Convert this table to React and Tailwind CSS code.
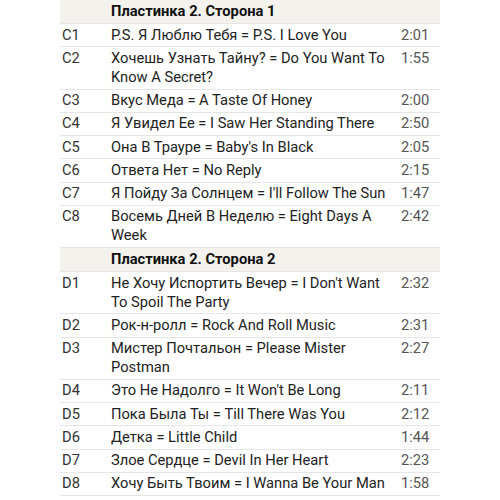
import React from 'react';

const sides = [
  {
    title: 'Пластинка 2. Сторона 1',
    tracks: [
      ['C1', 'P.S. Я Люблю Тебя = P.S. I Love You', '2:01'],
      ['C2', 'Хочешь Узнать Тайну? = Do You Want To Know A Secret?', '1:55'],
      ['C3', 'Вкус Меда = A Taste Of Honey', '2:00'],
      ['C4', 'Я Увидел Ее = I Saw Her Standing There', '2:50'],
      ['C5', 'Она В Трауре = Baby\'s In Black', '2:05'],
      ['C6', 'Ответа Нет = No Reply', '2:15'],
      ['C7', 'Я Пойду За Солнцем = I\'ll Follow The Sun', '1:47'],
      ['C8', 'Восемь Дней В Неделю = Eight Days A Week', '2:42'],
    ],
  },
  {
    title: 'Пластинка 2. Сторона 2',
    tracks: [
      ['D1', 'Не Хочу Испортить Вечер = I Don\'t Want To Spoil The Party', '2:32'],
      ['D2', 'Рок-н-ролл = Rock And Roll Music', '2:31'],
      ['D3', 'Мистер Почтальон = Please Mister Postman', '2:27'],
      ['D4', 'Это Не Надолго = It Won\'t Be Long', '2:11'],
      ['D5', 'Пока Была Ты = Till There Was You', '2:12'],
      ['D6', 'Детка = Little Child', '1:44'],
      ['D7', 'Злое Сердце = Devil In Her Heart', '2:23'],
      ['D8', 'Хочу Быть Твоим = I Wanna Be Your Man', '1:58'],
    ],
  },
];

const App = () => {
  return (
    <div className="w-[500px] h-[500px] overflow-hidden bg-white font-['Roboto',sans-serif] text-[14.7px] leading-[19px] text-[#222]">
      <div className="ml-[60px] w-[380px]">
        {sides.map((side) => (
          <div key={side.title}>
            {/* side heading */}
            <div className="grid grid-cols-[51px_290px_39px] bg-[#f3f2ec] border-b border-[#e6e6e6] py-[2px]">
              <div />
              <div className="font-bold text-[#111]">{side.title}</div>
              <div />
            </div>
            {side.tracks.map(([code, name, time]) => (
              <div
                key={code}
                className="grid grid-cols-[51px_290px_39px] border-b border-[#e6e6e6] py-[1.625px]"
              >
                <div className="pl-[2px] text-[#333]">{code}</div>
                <div className="pr-[6px]">{name}</div>
                <div className="text-[#555]">{time}</div>
              </div>
            ))}
          </div>
        ))}
      </div>
    </div>
  );
};

export default App;
